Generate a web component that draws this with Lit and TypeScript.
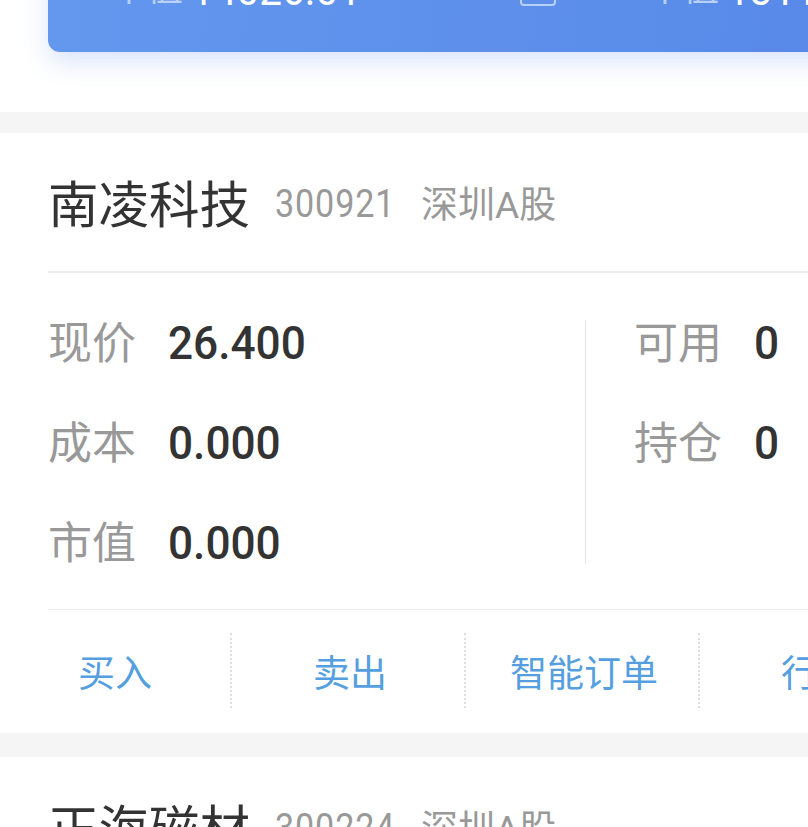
import { LitElement, html, css } from "lit";
import { customElement } from "lit/decorators.js";

@customElement("stock-card")
class StockCard extends LitElement {
  static properties = { name: {}, code: {} };
  name = "";
  code = "";
  static styles = css`
    :host { display: block; background: #fff; font-family: "Roboto", "Noto Sans CJK SC", sans-serif; }
    .head { margin: 0 0 0 48px; height: 140px; box-sizing: border-box; border-bottom: 2px solid #ebebeb; display: flex; align-items: center; }
    .name { font-size: 50.5px; color: #333; line-height: 60px; width: 200px; white-space: nowrap; padding-top: 7px; }
    .code { font-size: 39px; color: #999; margin-left: 27px; width: 146px; display: inline-block; transform: scaleX(.875); transform-origin: left center; letter-spacing: 1px; padding-top: 3px; }
    .mkt { font-size: 37px; color: #999; }
  `;
  render() {
    return html`<div class="head"><span class="name">${this.name}</span><span class="code">${this.code}</span><span class="mkt">深圳A股</span></div>`;
  }
}

@customElement("app-root")
export class AppRoot extends LitElement {
  static styles = css`
    :host { display: block; width: 808px; height: 827px; overflow: hidden; background: #fff; font-family: "Roboto", "Noto Sans CJK SC", sans-serif; }
    .top { height: 112px; padding-left: 48px; box-sizing: border-box; overflow: hidden; }
    .banner { height: 152px; margin: -100px 0 0 0; padding: 0 0 0 63px; box-sizing: border-box; width: 900px; border-radius: 0 0 12px 12px; background: linear-gradient(100deg, #6498ee, #5687e8); box-shadow: 0 10px 24px rgba(86,135,232,.22); display: flex; align-items: flex-start; color: #fff; }
    .cell { display: flex; align-items: baseline; font-size: 44px; line-height: 50px; margin-top: 65px; white-space: nowrap; }
    .cell .k { font-size: 36px; color: #b9d0f7; width: 80px; transform: translateY(-4px); }
    .cell .v { display: inline-block; transform: scaleX(.92); transform-origin: left center; }
    .cell1 { width: 409px; }
    .tile { width: 36px; height: 36px; margin: 70px 91px 0 0; border: 2px solid #b9d0f7; border-radius: 4px; box-sizing: border-box; }
    .gap { height: 21px; background: #f5f5f5; }
    .gap2 { height: 24px; background: #f5f5f5; }
    .body { display: flex; padding: 48px 0 45px 48px; height: 336px; box-sizing: border-box; }
    .col { display: flex; flex-direction: column; }
    .left { width: 537px; }
    .right { border-left: 1px solid #e6e6e6; padding-left: 48px; height: 243px; flex: 1; }
    .row { display: flex; align-items: center; height: 44px; margin-bottom: 56px; }
    .lab { font-size: 44px; line-height: 44px; color: #999; width: 120px; padding-top: 2px; }
    .val { font-size: 47px; line-height: 44px; color: #333; font-weight: 500; display: inline-block; transform: scaleX(.94); transform-origin: left center; }
    .rule { margin-left: 48px; height: 1px; background: #ebebeb; }
    .actions { display: flex; height: 123px; padding: 23px 0 25px 0; box-sizing: border-box; width: 1000px; }
    .act { width: 234px; box-sizing: border-box; padding-left: 4px; border-right: 2px dotted #dedede; display: flex; align-items: center; justify-content: center; color: #559fe0; font-size: 37px; }
    .act:first-child { width: 232px; padding-left: 0; }
  `;
  rows(items: [string, string][]) {
    return items.map(([l, v]) => html`<div class="row"><span class="lab">${l}</span><span class="val">${v}</span></div>`);
  }
  render() {
    return html`
      <div class="top"><div class="banner">
        <div class="cell cell1"><span class="k">市值</span><span class="v">14026.01</span></div>
        <div class="tile"></div>
        <div class="cell"><span class="k">市值</span><span class="v">1311</span></div>
      </div></div>
      <div class="gap"></div>
      <stock-card name="南凌科技" code="300921"></stock-card>
      <div class="body">
        <div class="col left">${this.rows([["现价", "26.400"], ["成本", "0.000"], ["市值", "0.000"]])}</div>
        <div class="col right">${this.rows([["可用", "0"], ["持仓", "0"]])}</div>
      </div>
      <div class="rule"></div>
      <div class="actions"><div class="act">买入</div><div class="act">卖出</div><div class="act">智能订单</div><div class="act">行情</div></div>
      <div class="gap2"></div>
      <stock-card name="正海磁材" code="300224"></stock-card>
    `;
  }
}
